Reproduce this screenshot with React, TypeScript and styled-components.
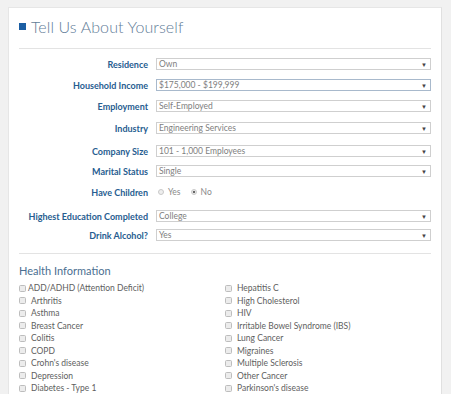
import React from "react";
import styled, { createGlobalStyle } from "styled-components";

const Global = createGlobalStyle`
  html, body { margin: 0; padding: 0; background: #f1f1f1; }
  body { font-family: Lato, "Open Sans", Arial, sans-serif; }
  * { box-sizing: border-box; }
`;

const Page = styled.div`
  padding: 7px 9px 0 8px;
  height: 394px;
  overflow: hidden;
`;

const Card = styled.div`
  background: #fff;
  border: 1px solid #e6e6e6;
  border-right: 1px solid #e0e0e0;
  padding: 0 10px 20px 10px;
  min-height: 400px;
`;

const Title = styled.h1`
  display: flex;
  align-items: center;
  gap: 5px;
  margin: 0;
  padding-bottom: 4px;
  height: 40px;
  font-size: 16px;
  font-weight: 300;
  color: #5f7d98;
  letter-spacing: 0.1px;
`;

const Square = styled.span`
  width: 7px;
  height: 7px;
  background: #1b5ea3;
  display: inline-block;
`;

const Rule = styled.div<{ $top: number }>`
  height: 1px;
  background: #e3e3e3;
  margin-top: ${(p) => p.$top}px;
`;

const Row = styled.div<{ $space: number }>`
  display: grid;
  grid-template-columns: 129px 275px;
  column-gap: 8px;
  align-items: center;
  height: 12px;
  margin-top: ${(p) => p.$space}px;
`;

const Label = styled.div`
  text-align: right;
  font-size: 9px;
  font-weight: 700;
  color: #275d90;
  white-space: nowrap;
`;

const Select = styled.div<{ $focus?: boolean }>`
  height: 12px;
  border: 1px solid ${(p) => (p.$focus ? "#a8b9cc" : "#cfcfcf")};
  display: flex;
  align-items: center;
  justify-content: space-between;
  padding: 0 3px 0 2px;
  font-size: 8.5px;
  color: #808080;
  background: #fff;
  white-space: nowrap;
`;

const Arrow = styled.span`
  font-size: 6px;
  color: #444;
`;

const Radios = styled.div`
  display: flex;
  align-items: center;
  gap: 10px;
  padding-left: 2px;
  font-size: 8.5px;
  color: #8a8a8a;
`;

const RadioItem = styled.span`
  display: inline-flex;
  align-items: center;
  gap: 4px;
`;

const Dot = styled.span<{ $on?: boolean }>`
  width: 6px;
  height: 6px;
  border-radius: 50%;
  border: 1px solid #c9c9c9;
  background: ${(p) => (p.$on ? "radial-gradient(circle, #666 0 1.3px, #eee 1.6px)" : "#eee")};
`;

const SubHead = styled.h2`
  margin: 10px 0 0 0;
  font-size: 11px;
  font-weight: 400;
  color: #4b6f91;
  height: 14px;
`;

const Grid = styled.div`
  display: grid;
  grid-template-columns: 206px 1fr;
  grid-auto-flow: column;
  grid-template-rows: repeat(9, 12.5px);
  margin-top: 4px;
`;

const Check = styled.div<{ $tight?: boolean }>`
  display: flex;
  align-items: center;
  gap: ${(p) => (p.$tight ? 2 : 5)}px;
  font-size: 8.5px;
  color: #5e5e5e;
  white-space: nowrap;
`;

const Box = styled.span`
  width: 7px;
  height: 7px;
  border: 1px solid #bdbdbd;
  border-radius: 1.5px;
  background: #ececec;
  flex: none;
`;

const rows: { label: string; value: string; space: number; focus?: boolean }[] = [
  { label: "Residence", value: "Own", space: 9 },
  { label: "Household Income", value: "$175,000 - $199,999", space: 9, focus: true },
  { label: "Employment", value: "Self-Employed", space: 9 },
  { label: "Industry", value: "Engineering Services", space: 10 },
  { label: "Company Size", value: "101 - 1,000 Employees", space: 11 },
];

const rows2: { label: string; value: string; space: number }[] = [
  { label: "Highest Education Completed", value: "College", space: 12 },
  { label: "Drink Alcohol?", value: "Yes", space: 7 },
];

const left = [
  "ADD/ADHD (Attention Deficit)",
  "Arthritis",
  "Asthma",
  "Breast Cancer",
  "Colitis",
  "COPD",
  "Crohn's disease",
  "Depression",
  "Diabetes - Type 1",
];
const right = [
  "Hepatitis C",
  "High Cholesterol",
  "HIV",
  "Irritable Bowel Syndrome (IBS)",
  "Lung Cancer",
  "Migraines",
  "Multiple Sclerosis",
  "Other Cancer",
  "Parkinson's disease",
];

export default function App() {
  return (
    <Page>
      <Global />
      <Card>
        <Title>
          <Square />
          Tell Us About Yourself
        </Title>
        <Rule $top={0} />
        {rows.map((r) => (
          <Row key={r.label} $space={r.space}>
            <Label>{r.label}</Label>
            <Select $focus={r.focus}>
              {r.value}
              <Arrow>▼</Arrow>
            </Select>
          </Row>
        ))}
        <Row $space={8}>
          <Label>Marital Status</Label>
          <Select>
            Single
            <Arrow>▼</Arrow>
          </Select>
        </Row>
        <Row $space={9}>
          <Label>Have Children</Label>
          <Radios>
            <RadioItem>
              <Dot />
              Yes
            </RadioItem>
            <RadioItem>
              <Dot $on />
              No
            </RadioItem>
          </Radios>
        </Row>
        {rows2.map((r) => (
          <Row key={r.label} $space={r.space}>
            <Label>{r.label}</Label>
            <Select>
              {r.value}
              <Arrow>▼</Arrow>
            </Select>
          </Row>
        ))}
        <Rule $top={12} />
        <SubHead>Health Information</SubHead>
        <Grid>
          {left.map((t, i) => (
            <Check key={t} $tight={i === 0}>
              <Box />
              {t}
            </Check>
          ))}
          {right.map((t) => (
            <Check key={t}>
              <Box />
              {t}
            </Check>
          ))}
        </Grid>
      </Card>
    </Page>
  );
}
